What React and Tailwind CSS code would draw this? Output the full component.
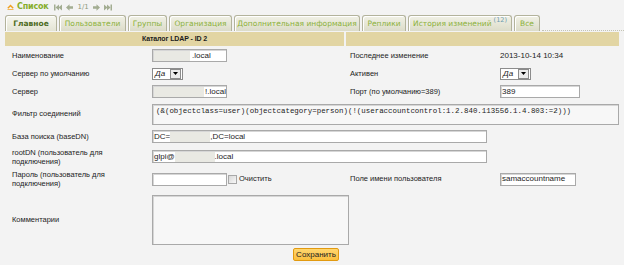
import React from "react";

const Tab = ({ w, active, children }) => (
  <div
    className={`h-[16px] ${w} shrink-0 rounded-t-[3px] border border-b-0 border-[#b3b39c] bg-gradient-to-b from-[#f1f1e6] to-[#dcdcc9] shadow-[inset_1px_1px_0_#ffffff] flex items-center justify-center whitespace-nowrap font-['DejaVu_Sans'] text-[7.5px] ${
      active ? "font-bold text-[#4e6b1e] from-[#f6f6ee] to-[#e4e4d4]" : "text-[#8cb13a]"
    }`}
  >
    {children}
  </div>
);

const Input = ({ w, children }) => (
  <div
    className={`${w} h-[13px] bg-white border border-[#a9a9a9] shadow-[inset_1px_1px_0_#d6d6d6] flex items-center overflow-hidden whitespace-nowrap text-[8px] leading-none pl-[1px]`}
  >
    {children}
  </div>
);

const Blur = ({ w }) => <span className={`${w} h-[10px] inline-block bg-[#e9e9e3]`} />;

const Select = () => (
  <div className="w-[31px] h-[12px] bg-white border border-[#8c8c8c] flex items-center">
    <span className="flex-1 pl-[2px] italic text-[8px] leading-none">Да</span>
    <span className="w-[11px] h-[10px] mr-[1px] border border-[#8c8c8c] bg-[#ececec] flex items-center justify-center">
      <svg width="5" height="3" viewBox="0 0 5 3">
        <path d="M0 0H5L2.5 3Z" fill="#000" />
      </svg>
    </span>
  </div>
);

const Row = ({ h, label, field, label2, field2 }) => (
  <div className={`flex items-center ${h}`}>
    <div className="w-[145px] shrink-0 pl-[7px] leading-[9px] text-[7.5px]">{label}</div>
    <div className="w-[196px] shrink-0 pl-[2px] flex items-center">{field}</div>
    <div className="w-[151px] shrink-0 pl-[4px] text-[7.5px]">{label2}</div>
    <div className="flex-1 pl-[3px] flex items-center">{field2}</div>
  </div>
);

export default function App() {
  return (
    <div className="w-[624px] h-[265px] bg-[#f3f3f3] overflow-hidden font-['Liberation_Sans',Arial,sans-serif] text-[8px] text-[#1c1c1c]">
      {/* top bar */}
      <div className="h-[14px] flex items-center pl-[7px] gap-[2px]">
        <svg width="7" height="6" viewBox="0 0 7 6">
          <path d="M0.8 4.2L3.5 1.5L6.2 4.2" stroke="#f0a020" strokeWidth="1.4" fill="none" />
          <path d="M0.5 5.6H6.5" stroke="#f0a020" strokeWidth="0.8" />
        </svg>
        <span className="font-bold text-[#86ad2a] text-[8px] font-['DejaVu_Sans'] tracking-[-0.2px] ml-[1px]">Список</span>
        <div className="flex items-center gap-[4px] ml-[4px]">
          <svg width="8" height="7" viewBox="0 0 8 7">
            <rect x="0" y="0.5" width="1.5" height="6" fill="#a3ad92" />
            <path d="M1.5 3.5L5 0.5V6.5Z" fill="#a3ad92" />
            <path d="M4.5 3.5L8 0.5V6.5Z" fill="#a3ad92" />
          </svg>
          <svg width="7" height="7" viewBox="0 0 7 7">
            <path d="M0 3.5L3.5 0.3V2.2H7V4.8H3.5V6.7Z" fill="#a3ad92" />
          </svg>
          <span className="text-[7px] font-['DejaVu_Sans'] text-[#8e9a7e]">1/1</span>
          <svg width="7" height="7" viewBox="0 0 7 7">
            <path d="M7 3.5L3.5 0.3V2.2H0V4.8H3.5V6.7Z" fill="#a3ad92" />
          </svg>
          <svg width="8" height="7" viewBox="0 0 8 7">
            <path d="M0 0.5L3.5 3.5L0 6.5Z" fill="#a3ad92" />
            <path d="M3 0.5L6.5 3.5L3 6.5Z" fill="#a3ad92" />
            <rect x="6.5" y="0.5" width="1.5" height="6" fill="#a3ad92" />
          </svg>
        </div>
      </div>

      {/* tabs */}
      <div className="flex items-end h-[17px] pl-[5px] gap-[2px]">
        <Tab w="w-[52px]" active>Главное</Tab>
        <Tab w="w-[67px]">Пользователи</Tab>
        <Tab w="w-[39px]">Группы</Tab>
        <Tab w="w-[63px]">Организация</Tab>
        <Tab w="w-[126px]">Дополнительная информация</Tab>
        <Tab w="w-[44px]">Реплики</Tab>
        <Tab w="w-[104px]">
          История изменений
          <span className="relative -top-[3px] ml-[2px] text-[6.5px] text-[#6f9bb0]">(12)</span>
        </Tab>
        <Tab w="w-[26px]">Все</Tab>
        <div className="flex-1 border-b border-dotted border-[#c4c4b4]" />
      </div>

      {/* table */}
      <div className="mx-[5px] mt-[1px]">
        <div className="flex h-[14px] gap-[2px]">
          <div className="w-[339px] bg-[#e2d5a3] flex items-center justify-center font-bold text-[7px] tracking-[-0.1px]">
            Каталог LDAP - ID 2
          </div>
          <div className="flex-1 bg-[#e2d5a3]" />
        </div>

        <Row
          h="h-[19px]"
          label="Наименование"
          field={
            <Input w="w-[75px]">
              <Blur w="w-[36px]" />
              <span className="ml-[2px]">.local</span>
            </Input>
          }
          label2="Последнее изменение"
          field2={<span className="text-[8px]">2013-10-14 10:34</span>}
        />
        <Row h="h-[17px]" label="Сервер по умолчанию" field={<Select />} label2="Активен" field2={<Select />} />
        <Row
          h="h-[19px]"
          label="Сервер"
          field={
            <Input w="w-[75px]">
              <Blur w="w-[58px]" />
              <span className="ml-[1px]">!.local</span>
            </Input>
          }
          label2="Порт (по умолчанию=389)"
          field2={<Input w="w-[80px]">389</Input>}
        />
        <div className="flex items-center h-[26px]">
          <div className="w-[145px] shrink-0 pl-[7px] text-[7.5px]">Фильтр соединений</div>
          <div className="flex-1 pl-[2px]">
            <div className="h-[21px] bg-[#f7f7f7] border border-[#a9a9a9] shadow-[inset_1px_1px_0_#d6d6d6] pl-[3px] pt-[2px] font-['Liberation_Mono',monospace] text-[7.45px] leading-[9px] whitespace-nowrap overflow-hidden">
              (&amp;(objectclass=user)(objectcategory=person)(!(useraccountcontrol:1.2.840.113556.1.4.803:=2)))
            </div>
          </div>
        </div>
        <div className="flex items-center h-[19px]">
          <div className="w-[145px] shrink-0 pl-[7px] text-[7.5px]">База поиска (baseDN)</div>
          <div className="pl-[2px]">
            <Input w="w-[335px]">
              <span>DC=</span>
              <Blur w="w-[40px]" />
              <span>,DC=local</span>
            </Input>
          </div>
        </div>
        <div className="flex items-center h-[21px]">
          <div className="w-[145px] shrink-0 pl-[7px] text-[7.5px] leading-[9px]">
            rootDN (пользователь для
            <br />
            подключения)
          </div>
          <div className="pl-[2px]">
            <Input w="w-[335px]">
              <span>glpi@</span>
              <Blur w="w-[40px]" />
              <span>.local</span>
            </Input>
          </div>
        </div>
        <Row
          h="h-[24px]"
          label={
            <>
              Пароль (пользователь для
              <br />
              подключения)
            </>
          }
          field={
            <div className="flex items-center">
              <Input w="w-[75px]" />
              <span className="w-[9px] h-[9px] ml-[1px] border border-[#a8a8a8] bg-gradient-to-br from-[#d8d8d8] to-[#f8f8f8]" />
              <span className="ml-[2px] text-[7.5px]">Очистить</span>
            </div>
          }
          label2="Поле имени пользователя"
          field2={<Input w="w-[76px]">samaccountname</Input>}
        />
        <div className="flex items-center h-[57px]">
          <div className="w-[145px] shrink-0 pl-[7px] text-[7.5px]">Комментарии</div>
          <div className="pl-[2px]">
            <div className="w-[197px] h-[50px] bg-[#f7f7f7] border border-[#a9a9a9] shadow-[inset_1px_1px_0_#d6d6d6]" />
          </div>
        </div>
        <div className="flex justify-center pl-[8px]">
          <button className="w-[46px] h-[13px] bg-gradient-to-b from-[#ffd66e] to-[#fbbf3c] border border-[#e29a10] rounded-[2px] text-[8px] leading-none text-[#222] flex items-center justify-center">
            Сохранить
          </button>
        </div>
      </div>
    </div>
  );
}
